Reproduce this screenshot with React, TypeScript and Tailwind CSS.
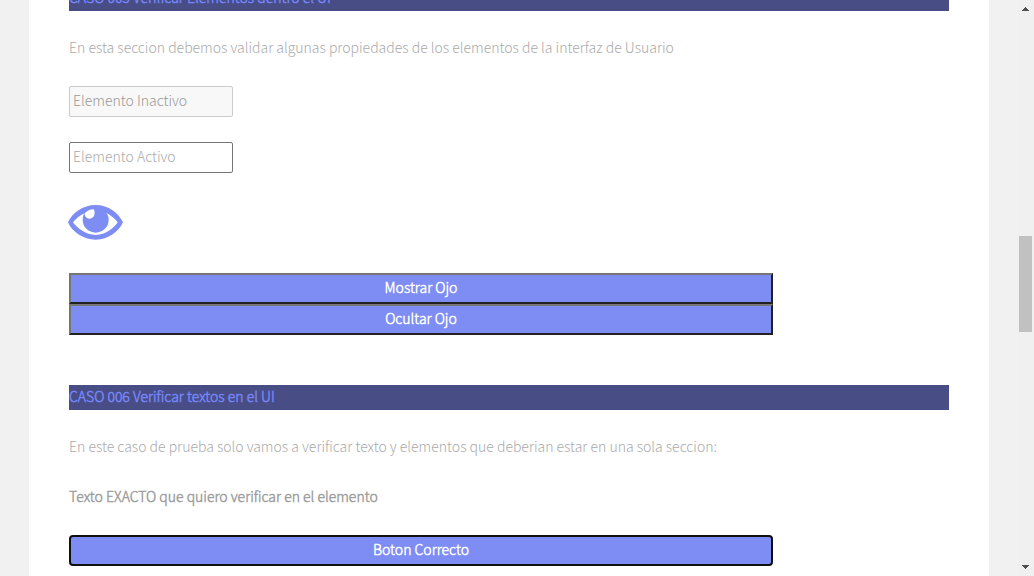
import type { ReactNode } from "react";

function CaseHeading({ children }: { children: ReactNode }) {
  return (
    <h2 className="bg-[#494d85] pb-0.5 font-['Noto_Sans_CJK_JP_Light','Noto_Sans_CJK_JP',sans-serif] font-bold text-[#7585fa]">
      {children}
    </h2>
  );
}

function EyeIcon() {
  return (
    <svg viewBox="0 0 165 105" className="h-[35px] w-[55px]" role="img" aria-label="Ojo">
      <path
        fill="#7d8df4"
        fillRule="evenodd"
        d="M0 52 C12 24 44 0 83 0 S152 24 165 52 C152 80 121 104 83 104 S12 80 0 52Z
           M15 52 C25 67 53 90 83 90 S140 67 149 52 C144 44 131 32 115 24 C120 30 122 36 122 44 A39 39 0 0 1 44 44 C44 36 46 30 49 25 C34 32 22 43 15 52Z
           M50 25 C56 19 65 13 77 13 C81 17 80 26 79 31 C76 38 70 41 64 41 C56 41 49 34 50 25Z"
      />
    </svg>
  );
}

const actionButton =
  "block w-4/5 cursor-pointer border-2 bg-[#7d8df4] pt-px pb-[3px] text-center font-['Noto_Sans_CJK_JP_Light','Noto_Sans_CJK_JP',sans-serif] font-bold text-white";
const bevel = "border-t-[#767676] border-l-[#767676] border-r-[#212121] border-b-[#212121]";
const field = "block h-[31px] w-[164px] rounded-xs border px-[3px] pb-[3px] font-light";

export default function App() {
  return (
    <div className="flex h-screen overflow-hidden bg-[#f1f1f1] font-['Noto_Sans_CJK_JP','Noto_Sans',sans-serif] text-[14px] leading-[23px] text-[#999]">
      <main className="mx-auto -mt-[14px] h-max max-w-[960px] flex-1 bg-white px-10 pb-10">
        <section className="mb-[50px]">
          <CaseHeading>CASO 005 Verificar Elementos dentro el UI</CaseHeading>
          <p className="my-[25px] pb-0.5 font-light text-[#aaa]">
            En esta seccion debemos validar algunas propiedades de los elementos de la interfaz de Usuario
          </p>
          <input
            className={`${field} mb-[25px] border-[#cbcbcb] bg-[#f8f8f8] placeholder:text-[#999]`}
            placeholder="Elemento Inactivo"
            aria-label="Elemento Inactivo"
            disabled
          />
          <input
            className={`${field} border-[#767676] bg-white placeholder:text-[#aaa]`}
            placeholder="Elemento Activo"
            aria-label="Elemento Activo"
          />
          <div className="-ml-px flex h-[100px] items-center pb-0.5">
            <EyeIcon />
          </div>
          <button type="button" className={`${actionButton} ${bevel}`}>Mostrar Ojo</button>
          <button type="button" className={`${actionButton} ${bevel}`}>Ocultar Ojo</button>
        </section>
        <section>
          <CaseHeading>CASO 006 Verificar textos en el UI</CaseHeading>
          <p className="my-[25px] pb-0.5 font-light text-[#aaa]">
            En este caso de prueba solo vamos a verificar texto y elementos que deberian estar en una sola seccion:
          </p>
          <p className="mb-[25px] pb-0.5 font-['Noto_Sans_CJK_JP_Light','Noto_Sans_CJK_JP',sans-serif] font-bold text-[#9f9f9f]">
            Texto EXACTO que quiero verificar en el elemento
          </p>
          <button type="button" className={`${actionButton} rounded-sm border-[#101010]`}>Boton Correcto</button>
        </section>
      </main>
      <div className="flex w-4 flex-none flex-col items-center bg-[#f0f0f0] py-[7px] pr-px" aria-hidden="true">
        <svg viewBox="0 0 7 4" className="h-1 w-[7px]" shapeRendering="crispEdges">
          <path fill="#505050" d="M3 0h1v1h1v1h1v1h1v1H0V3h1V2h1V1h1z" />
        </svg>
        <div className="h-[225px]" />
        <div className="h-24 w-[13px] bg-[#c1c1c1]" />
        <div className="flex-1" />
        <svg viewBox="0 0 7 4" className="h-1 w-[7px]" shapeRendering="crispEdges">
          <path fill="#505050" d="M0 0h7v1H6v1H5v1H4v1H3V3H2V2H1V1H0z" />
        </svg>
      </div>
    </div>
  );
}
